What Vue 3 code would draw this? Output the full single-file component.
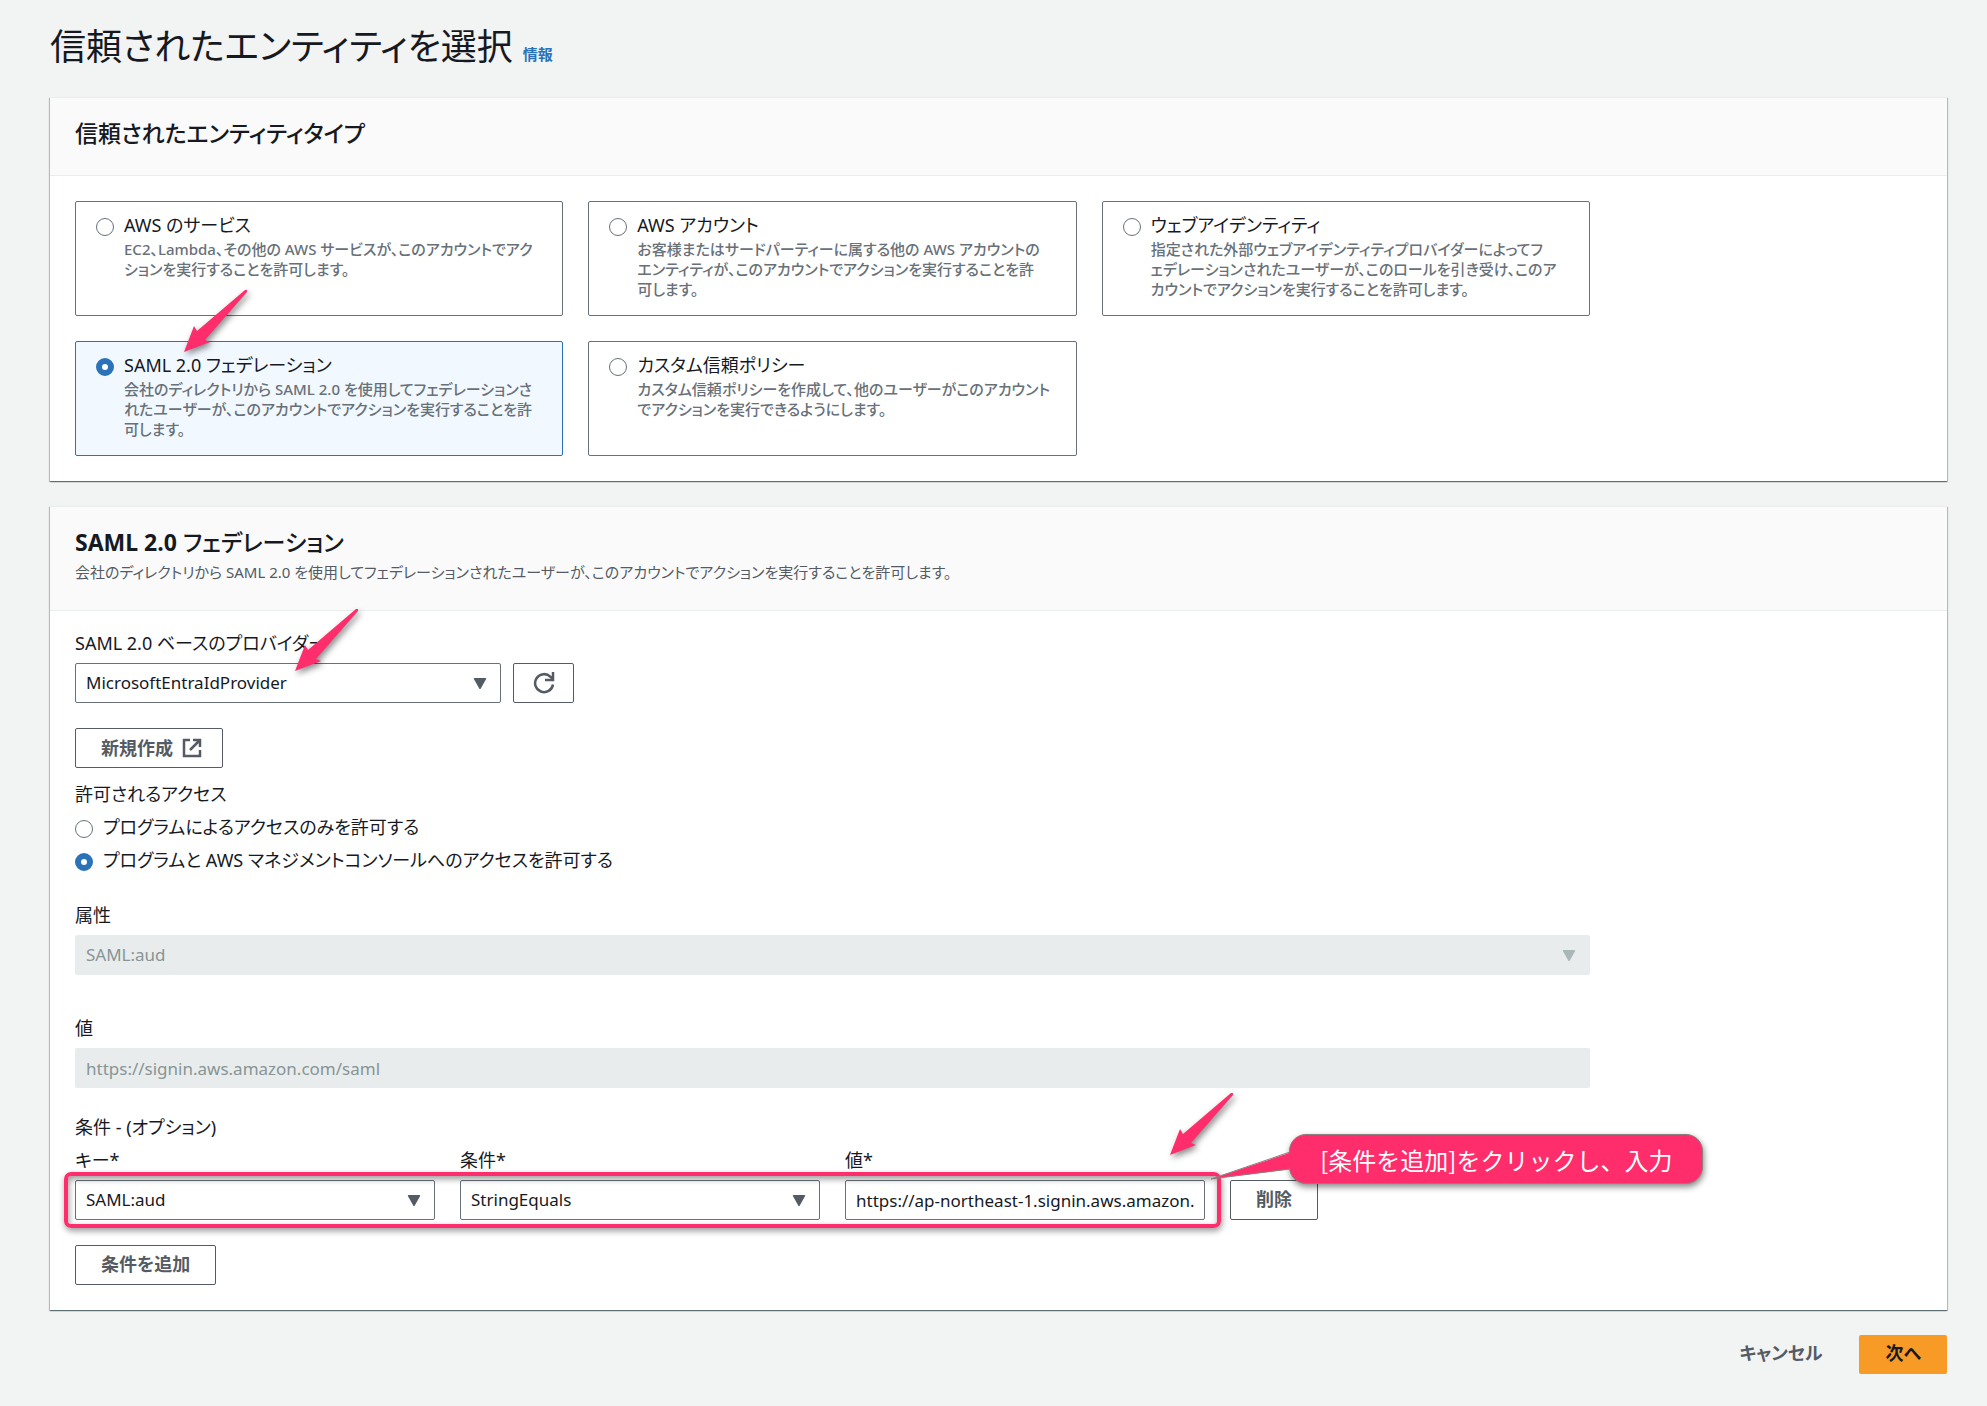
<script setup>
import { ref } from 'vue'

const entityTypes = [
  {
    id: 'service',
    title: 'AWS のサービス',
    text: 'EC2、Lambda、その他の AWS サービスが、このアカウントでアク\nションを実行することを許可します。',
  },
  {
    id: 'account',
    title: 'AWS アカウント',
    text: 'お客様またはサードパーティーに属する他の AWS アカウントの\nエンティティが、このアカウントでアクションを実行することを許\n可します。',
  },
  {
    id: 'web',
    title: 'ウェブアイデンティティ',
    text: '指定された外部ウェブアイデンティティプロバイダーによってフ\nェデレーションされたユーザーが、このロールを引き受け、このア\nカウントでアクションを実行することを許可します。',
  },
  {
    id: 'saml',
    title: 'SAML 2.0 フェデレーション',
    text: '会社のディレクトリから SAML 2.0 を使用してフェデレーションさ\nれたユーザーが、このアカウントでアクションを実行することを許\n可します。',
  },
  {
    id: 'custom',
    title: 'カスタム信頼ポリシー',
    text: 'カスタム信頼ポリシーを作成して、他のユーザーがこのアカウント\nでアクションを実行できるようにします。',
  },
]

const entityType = ref('saml')
const access = ref('console')
const provider = ref('MicrosoftEntraIdProvider')
const conditionKey = ref('SAML:aud')
const operator = ref('StringEquals')
const conditionValue = ref('https://ap-northeast-1.signin.aws.amazon.com/saml')

const arrowPath = 'M1 63 L11 37 L14 42 L62 1 L64 1 L64 3 L22 51 L27 53 Z'
const caretPath = 'M1 0h11q1 0 .6 1L7.3 10.5q-.8 1-1.6 0L.4 1Q0 0 1 0z'
</script>

<template>
  <main class="page">
    <header class="page-head">
      <h1>信頼されたエンティティを選択</h1>
      <a href="#" class="info">情報</a>
    </header>

    <section class="panel">
      <div class="panel-head">
        <h2>信頼されたエンティティタイプ</h2>
      </div>
      <div class="tiles">
        <label
          v-for="item in entityTypes"
          :key="item.id"
          class="tile"
          :class="{ selected: entityType === item.id }"
        >
          <input v-model="entityType" type="radio" name="entity" :value="item.id" />
          <span class="tile-body">
            <span class="tile-title">{{ item.title }}</span>
            <span class="tile-text">{{ item.text }}</span>
          </span>
          <svg v-if="item.id === 'saml'" class="arrow arrow-tile" viewBox="0 0 66 66" aria-hidden="true">
            <path :d="arrowPath" />
          </svg>
        </label>
      </div>
    </section>

    <section class="panel">
      <div class="panel-head with-text">
        <h2><b>SAML 2.0</b> フェデレーション</h2>
        <p>会社のディレクトリから SAML 2.0 を使用してフェデレーションされたユーザーが、このアカウントでアクションを実行することを許可します。</p>
      </div>
      <div class="form">
        <div class="field">
          <label for="provider">SAML 2.0 ベースのプロバイダー</label>
          <div class="provider-row">
            <div class="select provider">
              <select id="provider" v-model="provider">
                <option>MicrosoftEntraIdProvider</option>
              </select>
              <svg class="caret" viewBox="0 0 13 11" aria-hidden="true"><path :d="caretPath" /></svg>
              <svg class="arrow arrow-provider" viewBox="0 0 66 66" aria-hidden="true">
                <path :d="arrowPath" />
              </svg>
            </div>
            <button type="button" class="btn refresh" aria-label="更新">
              <svg viewBox="0 0 22 22" aria-hidden="true">
                <path d="M20 12.500A9 9 0 1 1 17.500 4.800L20 7" />
                <path d="M20 0v8h-8" />
              </svg>
            </button>
          </div>
        </div>

        <button type="button" class="btn create">
          新規作成
          <svg viewBox="0 0 20 20" aria-hidden="true">
            <path d="M8 2H2v16h16v-6" />
            <path d="M11 2h7v7M18 2L8 12" />
          </svg>
        </button>

        <fieldset class="access">
          <legend>許可されるアクセス</legend>
          <label>
            <input v-model="access" type="radio" name="access" value="program" />
            プログラムによるアクセスのみを許可する
          </label>
          <label>
            <input v-model="access" type="radio" name="access" value="console" />
            プログラムと AWS マネジメントコンソールへのアクセスを許可する
          </label>
        </fieldset>

        <div class="field attribute">
          <label for="attribute">属性</label>
          <div class="select disabled">
            <select id="attribute" disabled>
              <option>SAML:aud</option>
            </select>
            <svg class="caret" viewBox="0 0 13 11" aria-hidden="true"><path :d="caretPath" /></svg>
          </div>
        </div>

        <div class="field value">
          <label for="value">値</label>
          <input id="value" class="text" type="text" value="https://signin.aws.amazon.com/saml" disabled />
        </div>

        <div class="conditions">
          <div class="conditions-title">条件 - (オプション)</div>
          <div class="condition">
            <div class="field">
              <label for="c-key">キー*</label>
              <div class="select">
                <select id="c-key" v-model="conditionKey">
                  <option>SAML:aud</option>
                </select>
                <svg class="caret" viewBox="0 0 13 11" aria-hidden="true"><path :d="caretPath" /></svg>
              </div>
            </div>
            <div class="field">
              <label for="c-op">条件*</label>
              <div class="select">
                <select id="c-op" v-model="operator">
                  <option>StringEquals</option>
                </select>
                <svg class="caret" viewBox="0 0 13 11" aria-hidden="true"><path :d="caretPath" /></svg>
              </div>
            </div>
            <div class="field">
              <label for="c-value">値*</label>
              <input id="c-value" v-model="conditionValue" class="text" type="text" />
            </div>
            <button type="button" class="btn remove">削除</button>

            <div class="highlight"></div>
            <svg class="arrow arrow-value" viewBox="0 0 66 66" aria-hidden="true">
              <path :d="arrowPath" />
            </svg>
            <div class="callout">
              <svg class="tail" viewBox="0 0 82 32" aria-hidden="true">
                <path class="fill" d="M82 2L1 29L82 19z" />
                <path class="edge" d="M80 2L1 29L80 19" />
              </svg>
              [条件を追加]をクリックし、入力
            </div>
          </div>
        </div>

        <button type="button" class="btn add">条件を追加</button>
      </div>
    </section>

    <footer class="actions">
      <button type="button" class="cancel">キャンセル</button>
      <button type="button" class="next">次へ</button>
    </footer>
  </main>
</template>

<style>
body {
  margin: 0;
  background: #f2f3f3;
}
</style>

<style scoped>
.page {
  box-sizing: border-box;
  padding: 25px 40px 32px 50px;
  color: #16191f;
  font: 400 18px/27px "Noto Sans", "Noto Sans CJK JP", sans-serif;
  font-feature-settings: "palt";
}
.page * {
  box-sizing: border-box;
}
button,
input,
select {
  font: inherit;
  font-feature-settings: inherit;
  color: inherit;
}
h1,
h2,
p {
  margin: 0;
}
.page-head {
  display: flex;
  align-items: baseline;
  gap: 10px;
  margin-bottom: 28px;
}
h1 {
  font-size: 36px;
  line-height: 44px;
  font-weight: 400;
}
h2 {
  font-size: 23px;
  line-height: 28px;
  font-weight: 500;
}
.info {
  color: #2a73b9;
  font-size: 15px;
  line-height: 20px;
  font-weight: 700;
  text-decoration: none;
}
.panel {
  margin-bottom: 25px;
  background: #fff;
  border-top: 1px solid #eaeded;
  box-shadow: 0 1px 1px #001c2466, 1px 1px 1px #001c2433, -1px 1px 1px #001c2433;
}
.panel-head {
  padding: 21px 25px 28px;
  background: #fafafa;
  border-bottom: 1px solid #eaeded;
}
.panel-head.with-text {
  padding-bottom: 28px;
}
.panel-head p {
  margin-top: 6px;
  color: #545b64;
  font-size: 15px;
  line-height: 20px;
}
.tiles {
  display: grid;
  grid-template-columns: repeat(3, 1fr);
  gap: 25px;
  max-width: 1565px;
  padding: 25px;
}
.tile {
  position: relative;
  display: flex;
  gap: 10px;
  padding: 10px 10px 14px 20px;
  border: 1px solid #687078;
  border-radius: 2px;
}
.tile.selected {
  background: #f1f8ff;
  border-color: #2a73b9;
}
input[type="radio"] {
  appearance: none;
  flex: none;
  width: 18px;
  height: 18px;
  margin: 6px 0 0;
  border: 1px solid #687078;
  border-radius: 50%;
  background: #fff;
}
input[type="radio"]:checked {
  border: 6px solid #2a73b9;
}
.tile-title,
.tile-text {
  display: block;
}
.tile-text {
  min-height: 62px;
  color: #687078;
  font-size: 15px;
  font-weight: 500;
  line-height: 20px;
  white-space: pre-line;
}
.form {
  max-width: 1565px;
  padding: 19px 25px 25px;
}
.field {
  display: flex;
  flex-direction: column;
  gap: 6px;
}
.provider-row {
  display: flex;
  gap: 12px;
}
.select {
  position: relative;
}
.provider {
  width: 426px;
}
select,
.text {
  display: block;
  width: 100%;
  height: 40px;
  margin: 0;
  padding: 0 10px;
  border: 1px solid #687078;
  border-radius: 2px;
  background: #fff;
  font-size: 17px;
  appearance: none;
}
select {
  padding-bottom: 2px;
}
select:disabled,
.text:disabled {
  background: #e9ecec;
  border-color: #e9ecec;
  color: #879596;
  opacity: 1;
}
.caret {
  position: absolute;
  right: 14px;
  top: 15px;
  width: 14px;
  height: 11px;
  fill: #545b64;
  pointer-events: none;
}
.disabled .caret {
  fill: #aab7b8;
}
.btn {
  display: flex;
  align-items: center;
  justify-content: center;
  height: 40px;
  padding: 0 25px 2px;
  border: 1px solid #545b64;
  border-radius: 2px;
  background: #fff;
  color: #545b64;
  font-weight: 700;
}
.btn svg {
  fill: none;
  stroke: #545b64;
  stroke-width: 2.5;
}
.refresh {
  width: 61px;
  padding: 0;
}
.refresh svg {
  width: 22px;
  height: 22px;
}
.create {
  gap: 9px;
  margin-top: 25px;
  padding: 0 20px 0 25px;
}
.create svg {
  width: 20px;
  height: 20px;
}
.access {
  display: flex;
  flex-direction: column;
  gap: 6px;
  margin: 13px 0 0;
  padding: 0;
  border: 0;
}
legend {
  padding: 0;
  margin-bottom: 6px;
}
.access label {
  display: flex;
  gap: 10px;
}
.attribute {
  margin-top: 28px;
}
.value {
  margin-top: 40px;
}
.conditions {
  margin-top: 26px;
}
.condition {
  position: relative;
  display: grid;
  grid-template-columns: repeat(4, 1fr);
  gap: 25px;
  align-items: end;
  margin-top: 6px;
}
.remove {
  justify-self: start;
}
.add {
  margin-top: 25px;
}
.highlight {
  position: absolute;
  top: 25px;
  bottom: -8px;
  left: -11px;
  right: calc(25% - 10px);
  border: 4px solid #ff2d6b;
  border-radius: 7px;
  box-shadow: 1px 3px 6px #0006, inset 1px 3px 6px #0006;
  pointer-events: none;
}
.arrow {
  position: absolute;
  width: 66px;
  height: 66px;
  fill: #ff2d6b;
  filter: drop-shadow(2px 3px 3px #0007);
  pointer-events: none;
}
.arrow-tile {
  left: 107px;
  top: -53px;
}
.arrow-provider {
  left: 219px;
  top: -55px;
}
.arrow-value {
  left: calc(75% - 42px);
  top: -55px;
}
.callout {
  position: absolute;
  top: -13px;
  left: calc(75% + 78px);
  height: 50px;
  padding: 0 30px;
  border: 1px solid #8a8080;
  border-radius: 17px;
  background: #ff2d6b;
  box-shadow: 1px 3px 6px #0007;
  color: #fff;
  font: 400 24px/50px "Noto Sans CJK JP", sans-serif;
  font-feature-settings: normal;
  white-space: nowrap;
}
.tail {
  position: absolute;
  left: -80px;
  top: 15px;
  width: 82px;
  height: 32px;
}
.tail .fill {
  fill: #ff2d6b;
}
.tail .edge {
  fill: none;
  stroke: #8a8080;
}
.actions {
  display: flex;
  justify-content: flex-end;
  gap: 11px;
}
.actions button {
  height: 39px;
  padding: 0 26px 2px;
  border: 0;
  border-radius: 2px;
  font-weight: 700;
}
.actions .cancel {
  background: none;
  color: #545b64;
}
.actions .next {
  background: #f79a26;
}
</style>
